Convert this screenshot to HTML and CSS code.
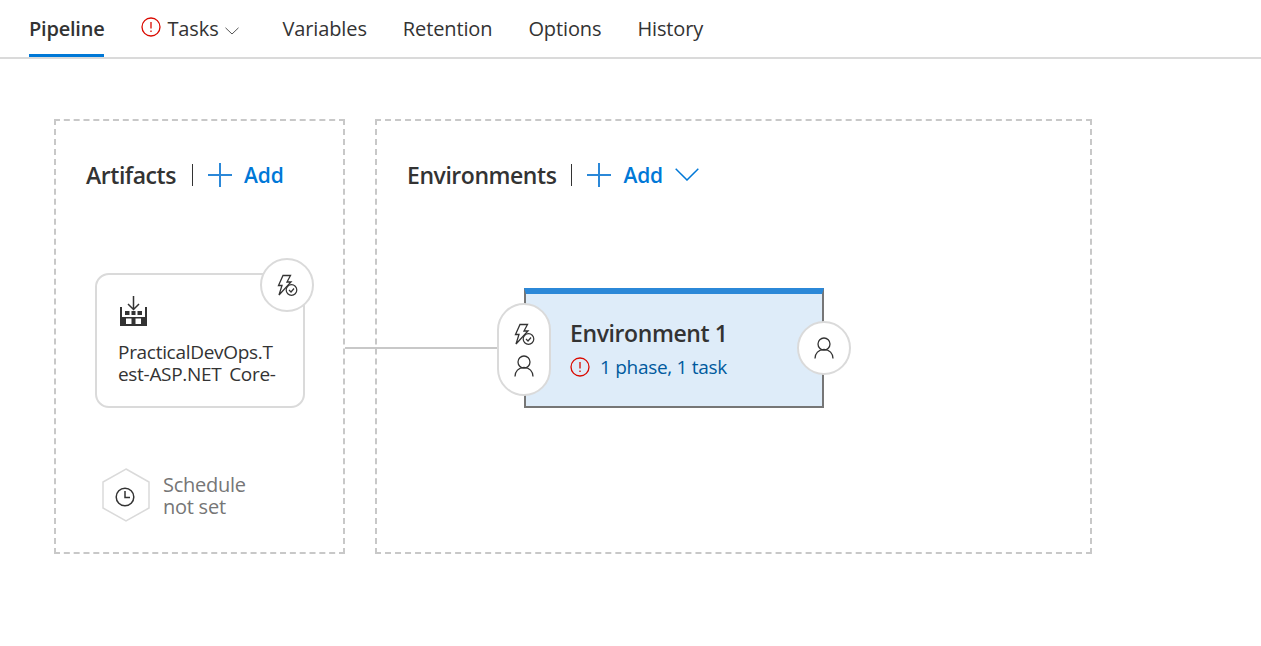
FILE: index.html
```html
<!DOCTYPE html>
<html lang="en">
<head>
    <meta charset="UTF-8">
    <title>Pipeline</title>
    <link rel="stylesheet" href="styles.css">
</head>
<body>

    <!-- Tabs -->
    <nav class="tabs">
        <a class="tab tab-active">Pipeline</a>
        <a class="tab tab-tasks">
            <svg class="icon-error" width="20" height="20" viewBox="0 0 20 20"><circle cx="10" cy="10" r="9" fill="none" stroke="#da0a00" stroke-width="1.3"/><path d="M10 5v6.500M10 13.500v1.600" stroke="#da0a00" stroke-width="1.3" fill="none"/></svg>
            Tasks
            <svg class="tab-chevron" width="14" height="8" viewBox="0 0 14 8"><path d="M.5.8 7 7l6.500-6.200" fill="none" stroke="#555" stroke-width="1"/></svg>
        </a>
        <a class="tab">Variables</a>
        <a class="tab">Retention</a>
        <a class="tab">Options</a>
        <a class="tab">History</a>
    </nav>

    <div class="canvas">
        <!-- Artifacts -->
        <section class="panel panel-artifacts">
            <header class="panel-head">
                <h2>Artifacts</h2>
                <span class="divider"></span>
                <svg class="plus" width="24" height="24" viewBox="0 0 24 24"><path d="M12 0v24M0 12h24" stroke="#2b88d8" stroke-width="2" fill="none"/></svg>
                <span class="add">Add</span>
            </header>

            <div class="artifact">
                <svg class="artifact-icon" width="27" height="30" viewBox="0 0 27 30">
                    <path d="M13.500 0v13M8 8l5.500 5.500L19 8" fill="none" stroke="#333" stroke-width="1.500"/>
                    <path fill="#333" d="M5 15h4.500v4H5zM11.500 15h4v4h-4zM17.500 15H22v4h-4.500z"/>
                    <path fill="#333" fill-rule="evenodd" d="M0 11h2v10h23V11h2v19H0zM6 22.500V28h5.500v-5.500zM15.500 22.500V28H21v-5.500z"/>
                </svg>
                <p class="artifact-name">PracticalDevOps.T<br>est-ASP.NET Core-</p>
                <span class="badge badge-trigger">
                    <svg width="22" height="22" viewBox="0 0 22 22"><path d="M7 1.500h7.500L11 8h4L3 21l3-9.500H2.500z" fill="none" stroke="#333" stroke-width="1.300"/><circle cx="15.500" cy="16" r="5.300" fill="#fff" stroke="#333" stroke-width="1.200"/><path d="m13 16 2 2 3-3.500" fill="none" stroke="#333" stroke-width="1.200"/></svg>
                </span>
            </div>

            <div class="schedule">
                <svg width="48" height="54" viewBox="0 0 48 54">
                    <path d="M24 1 47 14v26L24 53 1 40V14z" fill="#fff" stroke="#dadada" stroke-width="1.500"/>
                    <circle cx="23" cy="29" r="8.800" fill="none" stroke="#333" stroke-width="1.500"/>
                    <path d="M23 23v6.500h5" fill="none" stroke="#333" stroke-width="1.500"/>
                </svg>
                <span class="schedule-text">Schedule<br>not set</span>
            </div>

            <div class="connector"></div>
        </section>

        <!-- Environments -->
        <section class="panel panel-envs">
            <header class="panel-head">
                <h2>Environments</h2>
                <span class="divider"></span>
                <svg class="plus" width="24" height="24" viewBox="0 0 24 24"><path d="M12 0v24M0 12h24" stroke="#2b88d8" stroke-width="2" fill="none"/></svg>
                <span class="add">Add</span>
                <svg class="add-chevron" width="24" height="13" viewBox="0 0 24 13"><path d="M.7.7 12 12 23.300.7" fill="none" stroke="#0078d7" stroke-width="1.500"/></svg>
            </header>

            <div class="env">
                <h3 class="env-title">Environment 1</h3>
                <div class="env-status">
                    <svg width="20" height="20" viewBox="0 0 20 20"><circle cx="10" cy="10" r="9" fill="none" stroke="#da0a00" stroke-width="1.300"/><path d="M10 5v6.500M10 13.500v1.600" stroke="#da0a00" stroke-width="1.300" fill="none"/></svg>
                    <span>1 phase, 1 task</span>
                </div>
                <span class="pill">
                    <svg width="22" height="22" viewBox="0 0 22 22"><path d="M7 1.500h7.500L11 8h4L3 21l3-9.500H2.500z" fill="none" stroke="#333" stroke-width="1.300"/><circle cx="15.500" cy="16" r="5.300" fill="#fff" stroke="#333" stroke-width="1.200"/><path d="m13 16 2 2 3-3.500" fill="none" stroke="#333" stroke-width="1.200"/></svg>
                    <svg width="20" height="22" viewBox="0 0 20 22"><circle cx="10" cy="7" r="6" fill="none" stroke="#333" stroke-width="1.300"/><path d="M1 21.500c0-5 3.500-9 9-9s9 4 9 9" fill="none" stroke="#333" stroke-width="1.300"/></svg>
                </span>
                <span class="badge badge-post">
                    <svg width="20" height="22" viewBox="0 0 20 22"><circle cx="10" cy="7" r="6" fill="none" stroke="#333" stroke-width="1.300"/><path d="M1 21.500c0-5 3.500-9 9-9s9 4 9 9" fill="none" stroke="#333" stroke-width="1.300"/></svg>
                </span>
            </div>
        </section>
    </div>

</body>
</html>
```

FILE: styles.css
```css
body {
    margin: 0;
    background: #fff;
    font-family: "Open Sans", "Noto Sans", sans-serif;
    color: #333;
}
.tabs {
    display: flex;
    gap: 36px;
    height: 57px;
    padding-left: 29px;
    border-bottom: 2px solid #dadada;
}
.tab {
    display: flex;
    align-items: center;
    height: 57px;
    box-sizing: border-box;
    font-size: 20px;
    letter-spacing: -0.12px;
}
.tab-active {
    font-weight: 600;
    letter-spacing: -0.22px;
    border-bottom: 3px solid #0078d7;
    padding-top: 3px;
}
.tab-tasks {
    gap: 6px;
    width: 106px;
    white-space: nowrap;
}
.icon-error {
    margin: -4px 0 0 1px;
}
.tab-chevron {
    margin-top: 4px;
}
.canvas {
    display: flex;
    gap: 30px;
    padding: 60px 0 0 54px;
}
.panel {
    position: relative;
    height: 435px;
    box-sizing: border-box;
    border: 2px dashed #c8c8c8;
}
.panel-artifacts {
    width: 291px;
}
.panel-envs {
    width: 717px;
}
.panel-head {
    display: flex;
    align-items: center;
    height: 24px;
    margin: 42px 0 0 30px;
}
.panel-head h2 {
    margin: 0;
    font-size: 23px;
    font-weight: 600;
    letter-spacing: -0.45px;
}
.divider {
    width: 1px;
    height: 22px;
    margin: 0 15px;
    background: #333;
}
.panel-artifacts .divider {
    margin-left: 16px;
}
.add {
    margin-left: 12px;
    font-size: 21px;
    font-weight: 600;
    letter-spacing: -0.15px;
    color: #0078d7;
}
.add-chevron {
    margin-left: 12px;
    margin-top: -2px;
}
.artifact {
    position: absolute;
    left: 39px;
    top: 152px;
    width: 210px;
    height: 135px;
    box-sizing: border-box;
    border: 2px solid #dadada;
    border-radius: 14px;
    background: #fff;
}
.artifact-icon {
    position: absolute;
    left: 23px;
    top: 21px;
}
.artifact-name {
    margin: 0;
    padding: 66px 0 0 21px;
    font-size: 19px;
    line-height: 22px;
    letter-spacing: -0.3px;
    word-spacing: 3px;
    white-space: nowrap;
}
.badge {
    position: absolute;
    display: flex;
    align-items: center;
    justify-content: center;
    width: 54px;
    height: 54px;
    box-sizing: border-box;
    border: 2px solid #dadada;
    border-radius: 50%;
    background: #fff;
}
.badge-trigger {
    right: -11px;
    top: -17px;
}
.badge-post {
    right: -29px;
    top: 27px;
}
.schedule {
    position: absolute;
    left: 46px;
    top: 347px;
    display: flex;
    align-items: center;
    gap: 13px;
}
.schedule-text {
    padding-top: 2px;
    font-size: 20px;
    line-height: 22px;
    letter-spacing: -0.25px;
    color: #767676;
}
.connector {
    position: absolute;
    left: 289px;
    top: 226px;
    width: 152px;
    height: 2px;
    background: #c8c8c8;
}
.env {
    position: absolute;
    left: 147px;
    top: 167px;
    width: 300px;
    height: 120px;
    box-sizing: border-box;
    border: 2px solid #767676;
    border-top: 6px solid #2b88d8;
    background: #deecf9;
    padding: 24px 0 0 44px;
}
.env-title {
    margin: 0;
    font-size: 23px;
    line-height: 30px;
    font-weight: 600;
    letter-spacing: -0.4px;
}
.env-status {
    display: flex;
    align-items: center;
    gap: 10px;
    margin-top: 6px;
    font-size: 19px;
    letter-spacing: -0.3px;
    color: #005a9e;
}
.pill {
    position: absolute;
    left: -29px;
    top: 9px;
    display: flex;
    flex-direction: column;
    align-items: center;
    justify-content: center;
    gap: 10px;
    width: 54px;
    height: 93px;
    box-sizing: border-box;
    border: 2px solid #dadada;
    border-radius: 27px;
    background: #fff;
}
```
